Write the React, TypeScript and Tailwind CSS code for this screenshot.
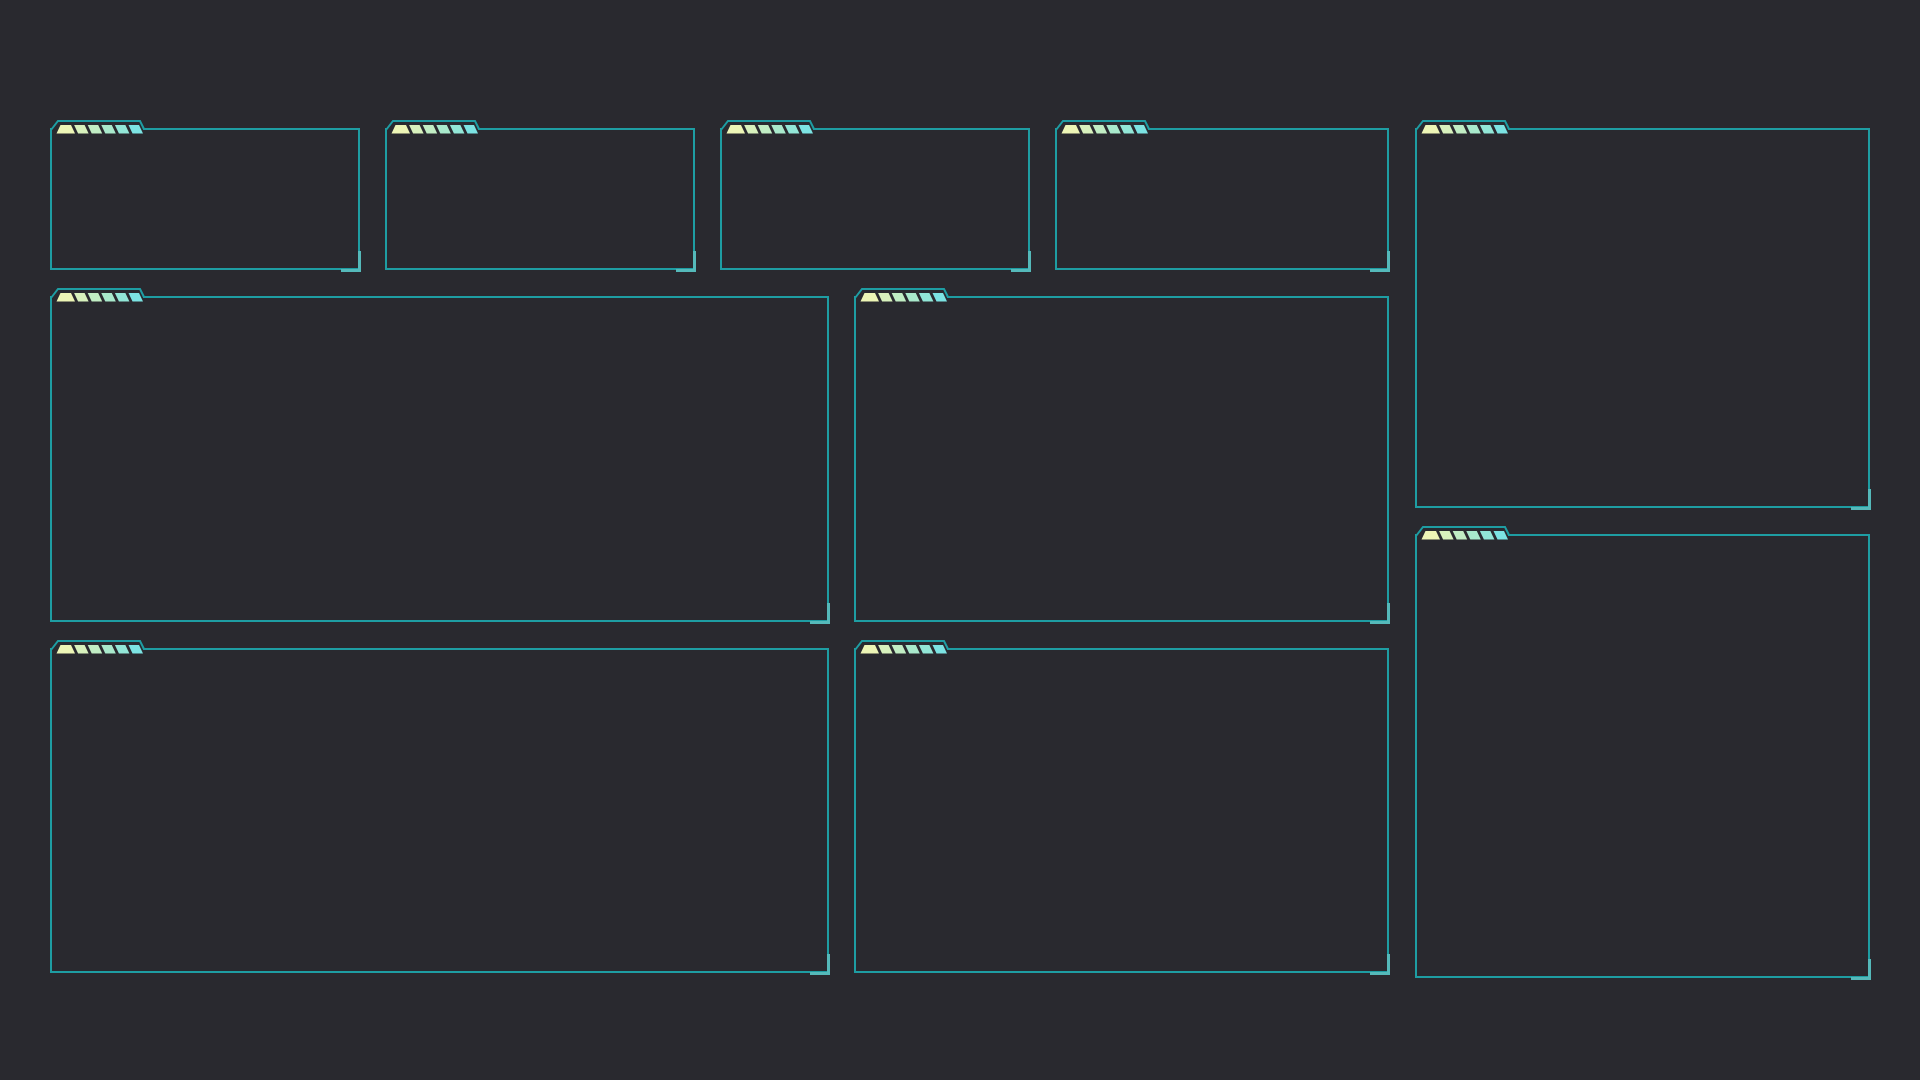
import clsx from 'clsx'

const BORDER = '#1e9da3'
const BG = '#29292f'
const STRIPES = ['#edf5b6', '#d8f1bd', '#c1edc4', '#a9e9cc', '#92e6d7', '#7ce3e3']

function Tab() {
  return (
    <svg
      className="pointer-events-none absolute left-0 top-0 overflow-visible"
      width="96"
      height="16"
      viewBox="0 0 96 16"
    >
      {/* hide the panel's top border under the tab */}
      <path d="M2 9 L8.5 2 L89.5 2 L93 9 L93 11 L2 11 Z" fill={BG} />
      <path d="M1 10 L8 1 L90 1 L94 9" fill="none" stroke={BORDER} strokeWidth="2" />
      {STRIPES.map((color, i) => {
        const x = 10.5 + 13.6 * i
        const left = i === 0 ? 6.5 : x + 4
        return (
          <polygon
            key={color}
            points={`${x},5 ${x + 10.5},5 ${x + 14.5},13.5 ${left},13.5`}
            fill={color}
          />
        )
      })}
    </svg>
  )
}

function Panel({ className }: { className?: string }) {
  return (
    <div className={clsx('relative pt-[8px]', className)}>
      <div className="h-full border-2 border-[#1e9da3]" />
      <Tab />
      <span className="absolute -bottom-[2px] -right-px h-[21px] w-[20px] border-b-[3px] border-r-[3px] border-[#55b9ba]" />
    </div>
  )
}

export default function App() {
  return (
    <div className="min-h-[1080px] w-full bg-[#29292f] pl-[50px] pt-[120px]">
      <div className="flex gap-[26px]">
        <div className="grid w-[1339px] grid-rows-[150px_334px_333px] gap-y-[18px]">
          <div className="grid grid-cols-[310px_310px_310px_1fr] gap-x-[25px]">
            <Panel />
            <Panel />
            <Panel />
            <Panel />
          </div>
          <div className="grid grid-cols-[779px_1fr] gap-x-[25px]">
            <Panel />
            <Panel />
          </div>
          <div className="grid grid-cols-[779px_1fr] gap-x-[25px]">
            <Panel />
            <Panel />
          </div>
        </div>
        <div className="flex w-[455px] flex-col gap-[18px]">
          <Panel className="h-[388px]" />
          <Panel className="h-[452px]" />
        </div>
      </div>
    </div>
  )
}
